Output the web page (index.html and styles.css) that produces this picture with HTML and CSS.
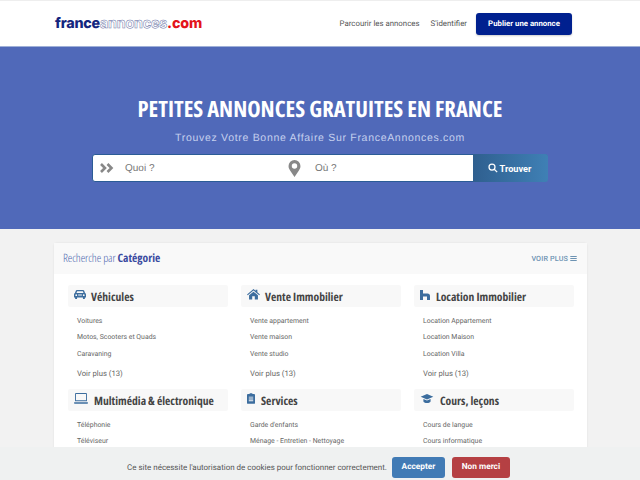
FILE: index.html
```html
<!DOCTYPE html>
<html lang="fr">
<head>
  <meta charset="UTF-8" />
  <title>France Annonces</title>
  <link rel="stylesheet" href="styles.css">
</head>
<body>
  <header class="topbar">
    <a class="logo"><span class="logo-blue">france</span><span class="logo-line">annonces</span><span class="logo-red">.com</span></a>
    <nav class="topnav">
      <a>Parcourir les annonces</a>
      <a>S'identifier</a>
      <a class="btn-publish">Publier une annonce</a>
    </nav>
  </header>

  <section class="hero">
    <h1>PETITES ANNONCES GRATUITES EN FRANCE</h1>
    <p>Trouvez Votre Bonne Affaire Sur FranceAnnonces.com</p>
    <form class="search">
      <div class="field field-what">
        <svg class="ico-chevrons" viewBox="0 0 14 10"><path d="M1 1l4 4-4 4M7.500 1l4 4-4 4" /></svg>
        <span>Quoi ?</span>
      </div>
      <div class="field field-where">
        <svg class="ico-pin" viewBox="0 0 14 20"><path fill-rule="evenodd" d="M7 0a7 7 0 0 1 7 7c0 2.500-.8 3.700-2 5.500L7 20l-5-7.500C.8 10.700 0 9.500 0 7a7 7 0 0 1 7-7zm0 3.800a3.200 3.200 0 1 0 0 6.400 3.200 3.200 0 0 0 0-6.400z" /></svg>
        <span>Où ?</span>
      </div>
      <button type="button" class="btn-find">
        <svg class="ico-search" viewBox="0 0 12 12"><circle cx="4.800" cy="4.800" r="3.600" /><path d="M7.500 7.500l3.500 3.500" /></svg>
        Trouver
      </button>
    </form>
  </section>

  <main class="card">
    <div class="card-head">
      <h2>Recherche par <b>Catégorie</b></h2>
      <a class="more">VOIR PLUS
        <svg class="ico-bars" viewBox="0 0 9 7"><path d="M0 0h9v1.500H0zM0 2.750h9v1.500H0zM0 5.500h9V7H0z" /></svg>
      </a>
    </div>
    <div class="cats">
      <div class="cat">
        <h3>
          <svg class="ico ico-car" viewBox="0 0 16 12"><path fill-rule="evenodd" d="M4 0h8c.8 0 1.300.4 1.600 1.100L14.700 4c.8.400 1.300 1.100 1.300 2v4h-1.500v1.200a.8.8 0 0 1-.8.8h-1a.8.8 0 0 1-.8-.8V10H4.100v1.200a.8.8 0 0 1-.8.8h-1a.8.8 0 0 1-.8-.8V10H0V6c0-.9.500-1.600 1.300-2l1.100-2.900C2.700.4 3.200 0 4 0zm.2 1.700L3.300 4h9.400l-.9-2.300zM3 5.700a1.200 1.200 0 1 0 0 2.400 1.200 1.200 0 0 0 0-2.400zm10 0a1.200 1.200 0 1 0 0 2.400 1.200 1.200 0 0 0 0-2.400zM5.500 6v1.300h5V6z" /></svg>
          Véhicules
        </h3>
        <ul>
          <li>Voitures</li>
          <li>Motos, Scooters et Quads</li>
          <li>Caravaning</li>
        </ul>
        <a class="see-all">Voir plus (13)</a>
      </div>
      <div class="cat">
        <h3>
          <svg class="ico ico-home" viewBox="0 0 16 13"><path d="M8 0l2.600 2.200V1h2.200v3.100L16 6.800l-.9 1L8 1.900.9 7.800l-.9-1zM8 3.300l5.500 4.500V13H9.600V9H6.400v4H2.500V7.800z" /></svg>
          Vente Immobilier
        </h3>
        <ul>
          <li>Vente appartement</li>
          <li>Vente maison</li>
          <li>Vente studio</li>
        </ul>
        <a class="see-all">Voir plus (13)</a>
      </div>
      <div class="cat">
        <h3>
          <svg class="ico ico-h" viewBox="0 0 10 10"><path d="M0 0h3v3.500h4.500A2.500 2.500 0 0 1 10 6v4H7V6.500H3V10H0z" /></svg>
          Location Immobilier
        </h3>
        <ul>
          <li>Location Appartement</li>
          <li>Location Maison</li>
          <li>Location Villa</li>
        </ul>
        <a class="see-all">Voir plus (13)</a>
      </div>
      <div class="cat">
        <h3>
          <svg class="ico ico-laptop" viewBox="0 0 15 12"><path fill-rule="evenodd" d="M2 0h11a1 1 0 0 1 1 1v8H1V1a1 1 0 0 1 1-1zm0 1v7h11V1zM0 10h15v.8a1 1 0 0 1-1 1H1a1 1 0 0 1-1-1z" /></svg>
          Multimédia &amp; électronique
        </h3>
        <ul>
          <li>Téléphonie</li>
          <li>Téléviseur</li>
        </ul>
      </div>
      <div class="cat">
        <h3>
          <svg class="ico ico-clip" viewBox="0 0 9 12"><path fill-rule="evenodd" d="M3 0h3v1h2a1 1 0 0 1 1 1v9a1 1 0 0 1-1 1H1a1 1 0 0 1-1-1V2a1 1 0 0 1 1-1h2zM2 4v1h5V4zm0 2v1h5V6zm0 2v1h5V8z" /></svg>
          Services
        </h3>
        <ul>
          <li>Garde d'enfants</li>
          <li>Ménage - Entretien - Nettoyage</li>
        </ul>
      </div>
      <div class="cat">
        <h3>
          <svg class="ico ico-cap" viewBox="0 0 14 10"><path d="M7 0l7 3-7 3-7-3zM3 5.600L7 7.300l4-1.700V8c0 1-1.800 2-4 2s-4-1-4-2z" /></svg>
          Cours, leçons
        </h3>
        <ul>
          <li>Cours de langue</li>
          <li>Cours informatique</li>
        </ul>
      </div>
    </div>
  </main>

  <div class="cookies">
    <span>Ce site nécessite l'autorisation de cookies pour fonctionner correctement.</span>
    <a class="btn-cookie btn-ok">Accepter</a>
    <a class="btn-cookie btn-no">Non merci</a>
  </div>
</body>
</html>
```

FILE: styles.css
```css
* {
  box-sizing: border-box;
}
html, body {
  height: 480px;
  overflow: hidden;
}
body {
  margin: 0;
  background: #f2f2f2;
  font-family: 'Roboto', sans-serif;
  color: #555;
  text-rendering: geometricPrecision;
}

/* top bar */
.topbar {
  height: 46px;
  background: #fff;
  border-top: 1px solid #eee;
  padding: 0 68px 0 55px;
  display: flex;
  align-items: center;
  justify-content: space-between;
}
.logo {
  font-family: 'Inter', sans-serif;
  font-weight: 800;
  font-size: 14.300px;
  letter-spacing: -0.2px;
}
.logo-blue { color: #14267e; }
.logo-line {
  color: #fff;
  font-weight: 700;
  -webkit-text-stroke: 0.5px #6d76a8;
}
.logo-red { color: #e3141c; }
.topnav {
  display: flex;
  align-items: center;
  gap: 11px;
  font-size: 7.850px;
  color: #555;
}
.btn-publish {
  margin-left: -2px;
  width: 96px;
  height: 22px;
  line-height: 22px;
  text-align: center;
  background: #00208f;
  color: #fff;
  font-weight: 700;
  font-size: 7.800px;
  border-radius: 3px;
  box-shadow: 0 1px 2px rgba(0,0,0,0.2);
}

/* hero */
.hero {
  height: 183px;
  background: #5069b9;
  border-top: 1px solid #9fb0d8;
  padding-top: 47px;
  text-align: center;
}
.hero h1 {
  margin: 0;
  font-family: 'Open Sans', sans-serif;
  font-stretch: 75%;
  font-weight: 700;
  font-size: 22.600px;
  line-height: 30px;
  color: #fff;
}
.hero p {
  margin: 7px 0 0;
  font-family: 'Liberation Sans', sans-serif;
  font-size: 10.500px;
  letter-spacing: 0.7px;
  line-height: 14px;
  color: #c5d0ee;
}
.search {
  width: 456px;
  height: 28px;
  margin: 9px 0 0 92px;
  display: flex;
  background: #fff;
  border: 1px solid #2b5c96;
  border-radius: 3px;
  font-family: 'Liberation Sans', sans-serif;
  font-size: 10px;
  color: #777;
  text-align: left;
}
.field {
  display: flex;
  align-items: center;
}
.field-what {
  width: 191px;
  padding-left: 7px;
  gap: 11px;
}
.field-where {
  flex: 1;
  padding-left: 4px;
  gap: 14px;
}
.ico-chevrons {
  width: 14px;
  height: 10px;
  fill: none;
  stroke: #888;
  stroke-width: 2.600;
}
.ico-pin {
  width: 13px;
  height: 17px;
  fill: #888;
}
.btn-find {
  width: 75px;
  margin: -1px -1px -1px 0;
  border: none;
  border-radius: 0 3px 3px 0;
  background: linear-gradient(90deg, #2f5f8f, #3f80b5);
  color: #fff;
  font-family: 'Roboto', sans-serif;
  font-weight: 700;
  font-size: 9.200px;
  padding: 0 2px 0 0;
  display: flex;
  align-items: center;
  justify-content: center;
  gap: 2px;
}
.ico-search {
  width: 10px;
  height: 10px;
  fill: none;
  stroke: #fff;
  stroke-width: 1.500;
}

/* categories */
.card {
  width: 533px;
  margin: 14px 0 0 54px;
  background: #fff;
  border-radius: 4px;
  box-shadow: 0 0 2px rgba(0,0,0,0.1);
}
.card-head {
  height: 31px;
  padding: 0 10px 0 9px;
  background: #f9f9f9;
  display: flex;
  align-items: center;
  justify-content: space-between;
}
.card-head h2 {
  margin: 0;
  font-family: 'Open Sans', sans-serif;
  font-stretch: 75%;
  font-weight: 300;
  font-size: 11.500px;
  letter-spacing: -0.1px;
  color: #5069b0;
}
.card-head b {
  font-weight: 700;
  letter-spacing: 0;
  color: #3a4aa0;
}
.more {
  font-size: 7.200px;
  font-weight: 500;
  letter-spacing: 0.15px;
  color: #6d93b3;
  display: flex;
  align-items: center;
  gap: 2px;
}
.ico-bars {
  width: 7px;
  height: 5px;
  fill: #6d93b3;
}
.cats {
  padding: 11px 13px 0 14px;
  display: grid;
  grid-template-columns: repeat(3, 160px);
  column-gap: 13px;
}
.cat {
  height: 104px;
}
.cat h3 {
  margin: 0;
  height: 22px;
  background: #f8f8f8;
  border-radius: 2px;
  padding: 2px 0 0 6px;
  display: flex;
  align-items: center;
  gap: 6px;
  font-family: 'Open Sans', sans-serif;
  font-stretch: 75%;
  font-weight: 700;
  font-size: 11.600px;
  color: #444;
}
.ico {
  fill: #3c6d9e;
  margin-top: -5px;
}
.ico-car {
  width: 12px;
  height: 9px;
  margin-right: -1px;
}
.ico-home {
  width: 13px;
  height: 10.500px;
  margin-right: -1px;
}
.ico-h {
  width: 10px;
  height: 10px;
}
.ico-laptop {
  width: 14px;
  height: 11px;
}
.ico-clip {
  width: 8px;
  height: 11px;
}
.ico-cap {
  width: 14px;
  height: 9px;
}
.cat ul {
  list-style: none;
  margin: 5.500px 0 0;
  padding: 0 0 0 9px;
}
.cat li {
  height: 16.500px;
  line-height: 16.500px;
  font-size: 6.900px;
  color: #666;
}
.see-all {
  display: block;
  margin: 3.500px 0 0 9px;
  line-height: 16px;
  font-size: 7.700px;
  color: #666;
}

/* cookie bar */
.cookies {
  position: fixed;
  left: 0;
  right: 0;
  bottom: 0;
  height: 33px;
  background: #eff1f1;
  display: flex;
  align-items: center;
  justify-content: center;
  gap: 5px;
  padding: 8px 3px 0 0;
  font-size: 7.960px;
  color: #555;
}
.btn-cookie {
  height: 21px;
  line-height: 21px;
  text-align: center;
  border-radius: 3px;
  color: #fff;
  font-weight: 700;
  font-size: 8.300px;
}
.btn-ok {
  width: 53px;
  background: #417bb5;
}
.btn-no {
  width: 58px;
  margin-left: 2px;
  background: #b54043;
}
```
